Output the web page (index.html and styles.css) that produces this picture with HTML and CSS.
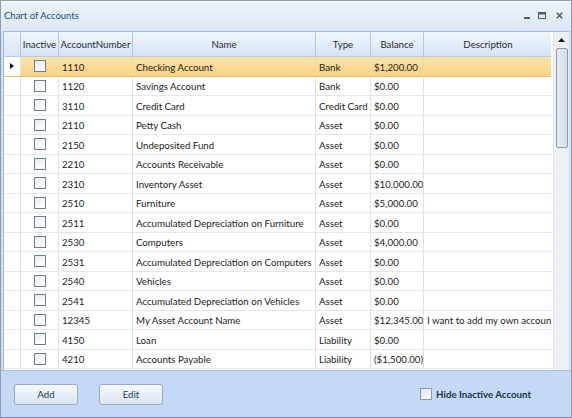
FILE: index.html
```html
<!DOCTYPE html>
<html>
<head>
<meta charset="utf-8">
<link rel="stylesheet" href="styles.css">
</head>
<body>
<div class="window">
  <div class="titlebar">
    <span class="title">Chart of Accounts</span>
    <div class="controls">
      <svg class="ic-min" width="6" height="8" viewBox="0 0 6 8"><rect x="0" y="6" width="6" height="2" fill="#4d5d74"/></svg>
      <svg class="ic-max" width="8" height="7" viewBox="0 0 8 7"><rect x="0.5" y="0.5" width="7" height="6" fill="none" stroke="#4d5d74"/><rect x="0" y="0" width="8" height="2.5" fill="#4d5d74"/></svg>
      <svg class="ic-close" width="7" height="7" viewBox="0 0 7 7"><path d="M0.8 0.8 L6.2 6.2 M6.2 0.8 L0.8 6.2" stroke="#4d5d74" stroke-width="1.6"/></svg>
    </div>
  </div>
  <div class="gridwrap">
    <div class="grid">
      <div class="row head">
        <div class="c rh"></div>
        <div class="c">Inactive</div>
        <div class="c">AccountNumber</div>
        <div class="c">Name</div>
        <div class="c">Type</div>
        <div class="c">Balance</div>
        <div class="c">Description</div>
      </div>
      <div class="row sel"><div class="c rh"><span class="arrow"></span></div><div class="c ck"><span class="box"></span></div><div class="c">1110</div><div class="c">Checking Account</div><div class="c">Bank</div><div class="c">$1,200.00</div><div class="c"></div></div>
      <div class="row"><div class="c rh"></div><div class="c ck"><span class="box"></span></div><div class="c">1120</div><div class="c">Savings Account</div><div class="c">Bank</div><div class="c">$0.00</div><div class="c"></div></div>
      <div class="row"><div class="c rh"></div><div class="c ck"><span class="box"></span></div><div class="c">3110</div><div class="c">Credit Card</div><div class="c">Credit Card</div><div class="c">$0.00</div><div class="c"></div></div>
      <div class="row"><div class="c rh"></div><div class="c ck"><span class="box"></span></div><div class="c">2110</div><div class="c">Petty Cash</div><div class="c">Asset</div><div class="c">$0.00</div><div class="c"></div></div>
      <div class="row"><div class="c rh"></div><div class="c ck"><span class="box"></span></div><div class="c">2150</div><div class="c">Undeposited Fund</div><div class="c">Asset</div><div class="c">$0.00</div><div class="c"></div></div>
      <div class="row"><div class="c rh"></div><div class="c ck"><span class="box"></span></div><div class="c">2210</div><div class="c">Accounts Receivable</div><div class="c">Asset</div><div class="c">$0.00</div><div class="c"></div></div>
      <div class="row"><div class="c rh"></div><div class="c ck"><span class="box"></span></div><div class="c">2310</div><div class="c">Inventory Asset</div><div class="c">Asset</div><div class="c">$10,000.00</div><div class="c"></div></div>
      <div class="row"><div class="c rh"></div><div class="c ck"><span class="box"></span></div><div class="c">2510</div><div class="c">Furniture</div><div class="c">Asset</div><div class="c">$5,000.00</div><div class="c"></div></div>
      <div class="row"><div class="c rh"></div><div class="c ck"><span class="box"></span></div><div class="c">2511</div><div class="c">Accumulated Depreciation on Furniture</div><div class="c">Asset</div><div class="c">$0.00</div><div class="c"></div></div>
      <div class="row"><div class="c rh"></div><div class="c ck"><span class="box"></span></div><div class="c">2530</div><div class="c">Computers</div><div class="c">Asset</div><div class="c">$4,000.00</div><div class="c"></div></div>
      <div class="row"><div class="c rh"></div><div class="c ck"><span class="box"></span></div><div class="c">2531</div><div class="c">Accumulated Depreciation on Computers</div><div class="c">Asset</div><div class="c">$0.00</div><div class="c"></div></div>
      <div class="row"><div class="c rh"></div><div class="c ck"><span class="box"></span></div><div class="c">2540</div><div class="c">Vehicles</div><div class="c">Asset</div><div class="c">$0.00</div><div class="c"></div></div>
      <div class="row"><div class="c rh"></div><div class="c ck"><span class="box"></span></div><div class="c">2541</div><div class="c">Accumulated Depreciation on Vehicles</div><div class="c">Asset</div><div class="c">$0.00</div><div class="c"></div></div>
      <div class="row"><div class="c rh"></div><div class="c ck"><span class="box"></span></div><div class="c">12345</div><div class="c">My Asset Account Name</div><div class="c">Asset</div><div class="c">$12,345.00</div><div class="c">I want to add my own account</div></div>
      <div class="row"><div class="c rh"></div><div class="c ck"><span class="box"></span></div><div class="c">4150</div><div class="c">Loan</div><div class="c">Liability</div><div class="c">$0.00</div><div class="c"></div></div>
      <div class="row"><div class="c rh"></div><div class="c ck"><span class="box"></span></div><div class="c">4210</div><div class="c">Accounts Payable</div><div class="c">Liability</div><div class="c">($1,500.00)</div><div class="c"></div></div>
    </div>
    <div class="scrollbar">
      <div class="sb-up"><svg width="7" height="4" viewBox="0 0 7 4"><path d="M0 4 L3.5 0 L7 4 Z" fill="#1a1a1a"/></svg></div>
      <div class="sb-thumb"></div>
    </div>
  </div>
  <div class="footer">
    <button class="btn">Add</button>
    <button class="btn">Edit</button>
    <label class="hide"><span class="box fbox"></span>Hide Inactive Account</label>
  </div>
</div>
</body>
</html>
```
FILE: styles.css
```css
html, body { margin: 0; padding: 0; }
body {
  width: 572px; height: 418px; overflow: hidden;
  font-family: "Lato", "Noto Sans", sans-serif;
  font-size: 9.7px;
  color: #1b1b1b;
  background: #fff;
}
.window {
  box-sizing: border-box;
  width: 572px; height: 418px;
  border: 1px solid #8d9db3;
  border-bottom-color: #6f8db5;
  background: #cfe0f6;
  display: flex; flex-direction: column;
}
.titlebar {
  height: 30px;
  box-sizing: border-box;
  display: flex; align-items: center;
  padding: 0 8px 2px 3px;
  background: linear-gradient(#eef3fa, #dbe7f6);
  border-top: 1px solid #fff;
}
.title { color: #1d4c8c; font-size: 9.5px; flex: 1; }
.controls { display: flex; align-items: center; }
.controls svg { display: block; }
.ic-min { margin-top: -2px; }
.ic-max { margin-left: 8px; }
.ic-close { margin-left: 10px; }
.gridwrap {
  margin: 0 2px 0 2px;
  height: 338px;
  display: flex;
  border-left: 1px solid #a7bcd6;
  border-top: 1px solid #a7bcd6;
  background: #fff;
}
.grid { width: 549px; overflow: hidden; }
.row {
  display: grid;
  grid-template-columns: 17px 38px 74px 183px 55px 53px 129px;
  height: 19.5px;
  border-bottom: 1px solid #e3e7ec;
  box-sizing: border-box;
}
.row .c {
  border-right: 1px solid #d9e1ea;
  padding-left: 3px;
  padding-top: 1px;
  display: flex; align-items: center;
  white-space: nowrap; overflow: hidden;
}
.row .rh { padding: 0; justify-content: center; }
.row.head {
  height: 25px;
  background: linear-gradient(#f1f6fc 0%, #e3edf9 50%, #d5e4f5 100%);
  border-bottom: 1px solid #b8cbe2;
}
.row.head .c {
  justify-content: center; padding: 0;
  border-right: 1px solid #b5c8df;
  color: #1e2a3a;
}
.row.head .rh { background: linear-gradient(#eef4fb, #d9e6f5); }
.row.sel { background: linear-gradient(#fde4ac, #f9d183); border-bottom-color: #f0c070; }
.row.sel .c { border-right-color: #f5d9a0; }
.row.sel .rh { background: #fff; border-right-color: #d9e1ea; }
.arrow {
  width: 0; height: 0;
  border-left: 4px solid #111;
  border-top: 3.5px solid transparent;
  border-bottom: 3.5px solid transparent;
}
.ck { justify-content: center; padding: 0 !important; }
.box {
  display: inline-block;
  width: 10px; height: 10px;
  border: 1px solid #6d7f93;
  background: linear-gradient(135deg, #e9edf2, #ffffff);
  box-sizing: content-box;
}
.scrollbar {
  width: 15px;
  margin-left: 2px;
  background: #edf0f4;
  border-left: 1px solid #e2e6eb;
  display: flex; flex-direction: column; align-items: center;
}
.sb-up { height: 15px; display: flex; align-items: center; justify-content: center; }
.sb-up svg { display: block; }
.sb-thumb {
  width: 12px; height: 100px;
  margin-top: 1px;
  box-sizing: border-box;
  border: 1px solid #8f9cad;
  border-radius: 2px;
  background: linear-gradient(90deg, #e7ebf0, #d7dde5);
}
.footer {
  flex: 1;
  display: flex; align-items: center;
  padding: 0 0 0 13px;
  background: #c3d9f6;
  border-top: 1px solid #a9bfdc;
}
.btn {
  width: 64px; height: 21px;
  margin: 0 21px 0 0;
  font-family: inherit; font-size: 9.7px;
  color: #1a3a62;
  border: 1px solid #99acc6;
  border-radius: 3px;
  background: linear-gradient(#f6f9fd, #dbe6f4);
  padding: 0;
}
.hide {
  margin-left: auto; margin-right: 40px;
  display: flex; align-items: center; gap: 4px;
  color: #1a3152; font-size: 9.7px; font-weight: 700;
}
.fbox { border-color: #8a97a6; background: linear-gradient(135deg, #e4e7eb, #f7f8fa); }
```
